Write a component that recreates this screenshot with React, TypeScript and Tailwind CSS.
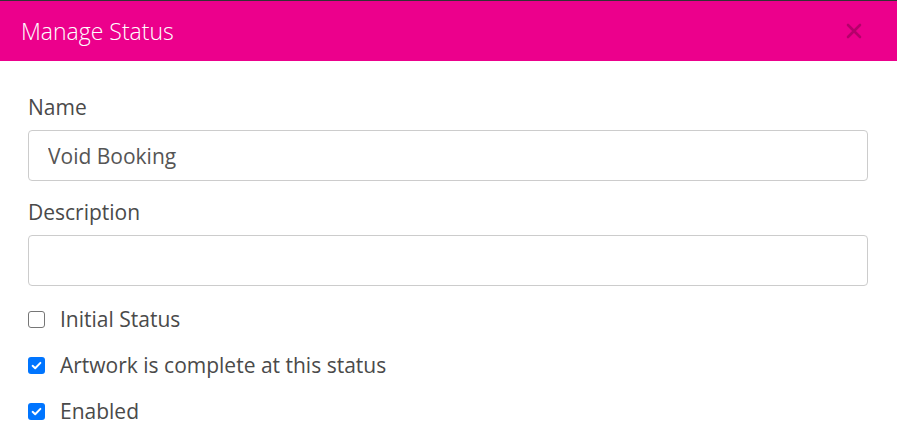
import { useState } from 'react';

type CheckRowProps = {
  label: string;
  checked: boolean;
  onToggle: () => void;
};

const CheckRow = ({ label, checked, onToggle }: CheckRowProps) => (
  <label className="flex h-[26px] cursor-pointer items-center" onClick={onToggle}>
    {checked ? (
      <span className="flex h-[17px] w-[17px] items-center justify-center rounded-[3px] bg-[#0075ff]">
        <svg viewBox="0 0 16 16" className="h-[13px] w-[13px]" fill="none">
          <path d="M3.2 8.4 6.4 11.4 12.8 4.8" stroke="white" strokeWidth="2.4" strokeLinecap="round" strokeLinejoin="round" />
        </svg>
      </span>
    ) : (
      <span className="h-[17px] w-[17px] rounded-[3px] border-[1.5px] border-[#767676] bg-white" />
    )}
    <span className="ml-[15px] text-[21px] leading-[26px] text-[#4a4a4a]">{label}</span>
  </label>
);

const App = () => {
  const [initial, setInitial] = useState(false);
  const [artwork, setArtwork] = useState(true);
  const [enabled, setEnabled] = useState(true);

  return (
    <div className="h-[440px] w-[897px] overflow-hidden bg-white font-['Open_Sans',sans-serif]">
      <div className="h-[1px] bg-[#333]" />
      <div className="flex h-[60px] items-center justify-between bg-[#ec008c] pl-[21px] pr-[35px]">
        <div className="text-[23px] font-light text-white">Manage Status</div>
        <button className="flex h-[16px] w-[16px] items-center justify-center">
          <svg viewBox="0 0 16 16" className="h-[16px] w-[16px]" fill="none">
            <path d="M2 2 14 14M14 2 2 14" stroke="#b5006b" strokeWidth="2.6" strokeLinecap="round" />
          </svg>
        </button>
      </div>
      <div className="px-[28px] pr-[29px] pt-[34px]">
        <div className="text-[21px] leading-[25px] text-[#4a4a4a]">Name</div>
        <input
          className="mt-[10px] h-[51px] w-full rounded-[4px] border border-[#ccc] px-[19px] text-[21px] text-[#555] outline-none"
          defaultValue="Void Booking"
        />
        <div className="mt-[19px] text-[21px] leading-[25px] text-[#4a4a4a]">Description</div>
        <input className="mt-[10px] h-[51px] w-full rounded-[4px] border border-[#ccc] px-[19px] text-[21px] text-[#555] outline-none" />
        <div className="mt-[20px] flex flex-col gap-[20px]">
          <CheckRow label="Initial Status" checked={initial} onToggle={() => setInitial(!initial)} />
          <CheckRow label="Artwork is complete at this status" checked={artwork} onToggle={() => setArtwork(!artwork)} />
          <CheckRow label="Enabled" checked={enabled} onToggle={() => setEnabled(!enabled)} />
        </div>
      </div>
    </div>
  );
};

export default App;
